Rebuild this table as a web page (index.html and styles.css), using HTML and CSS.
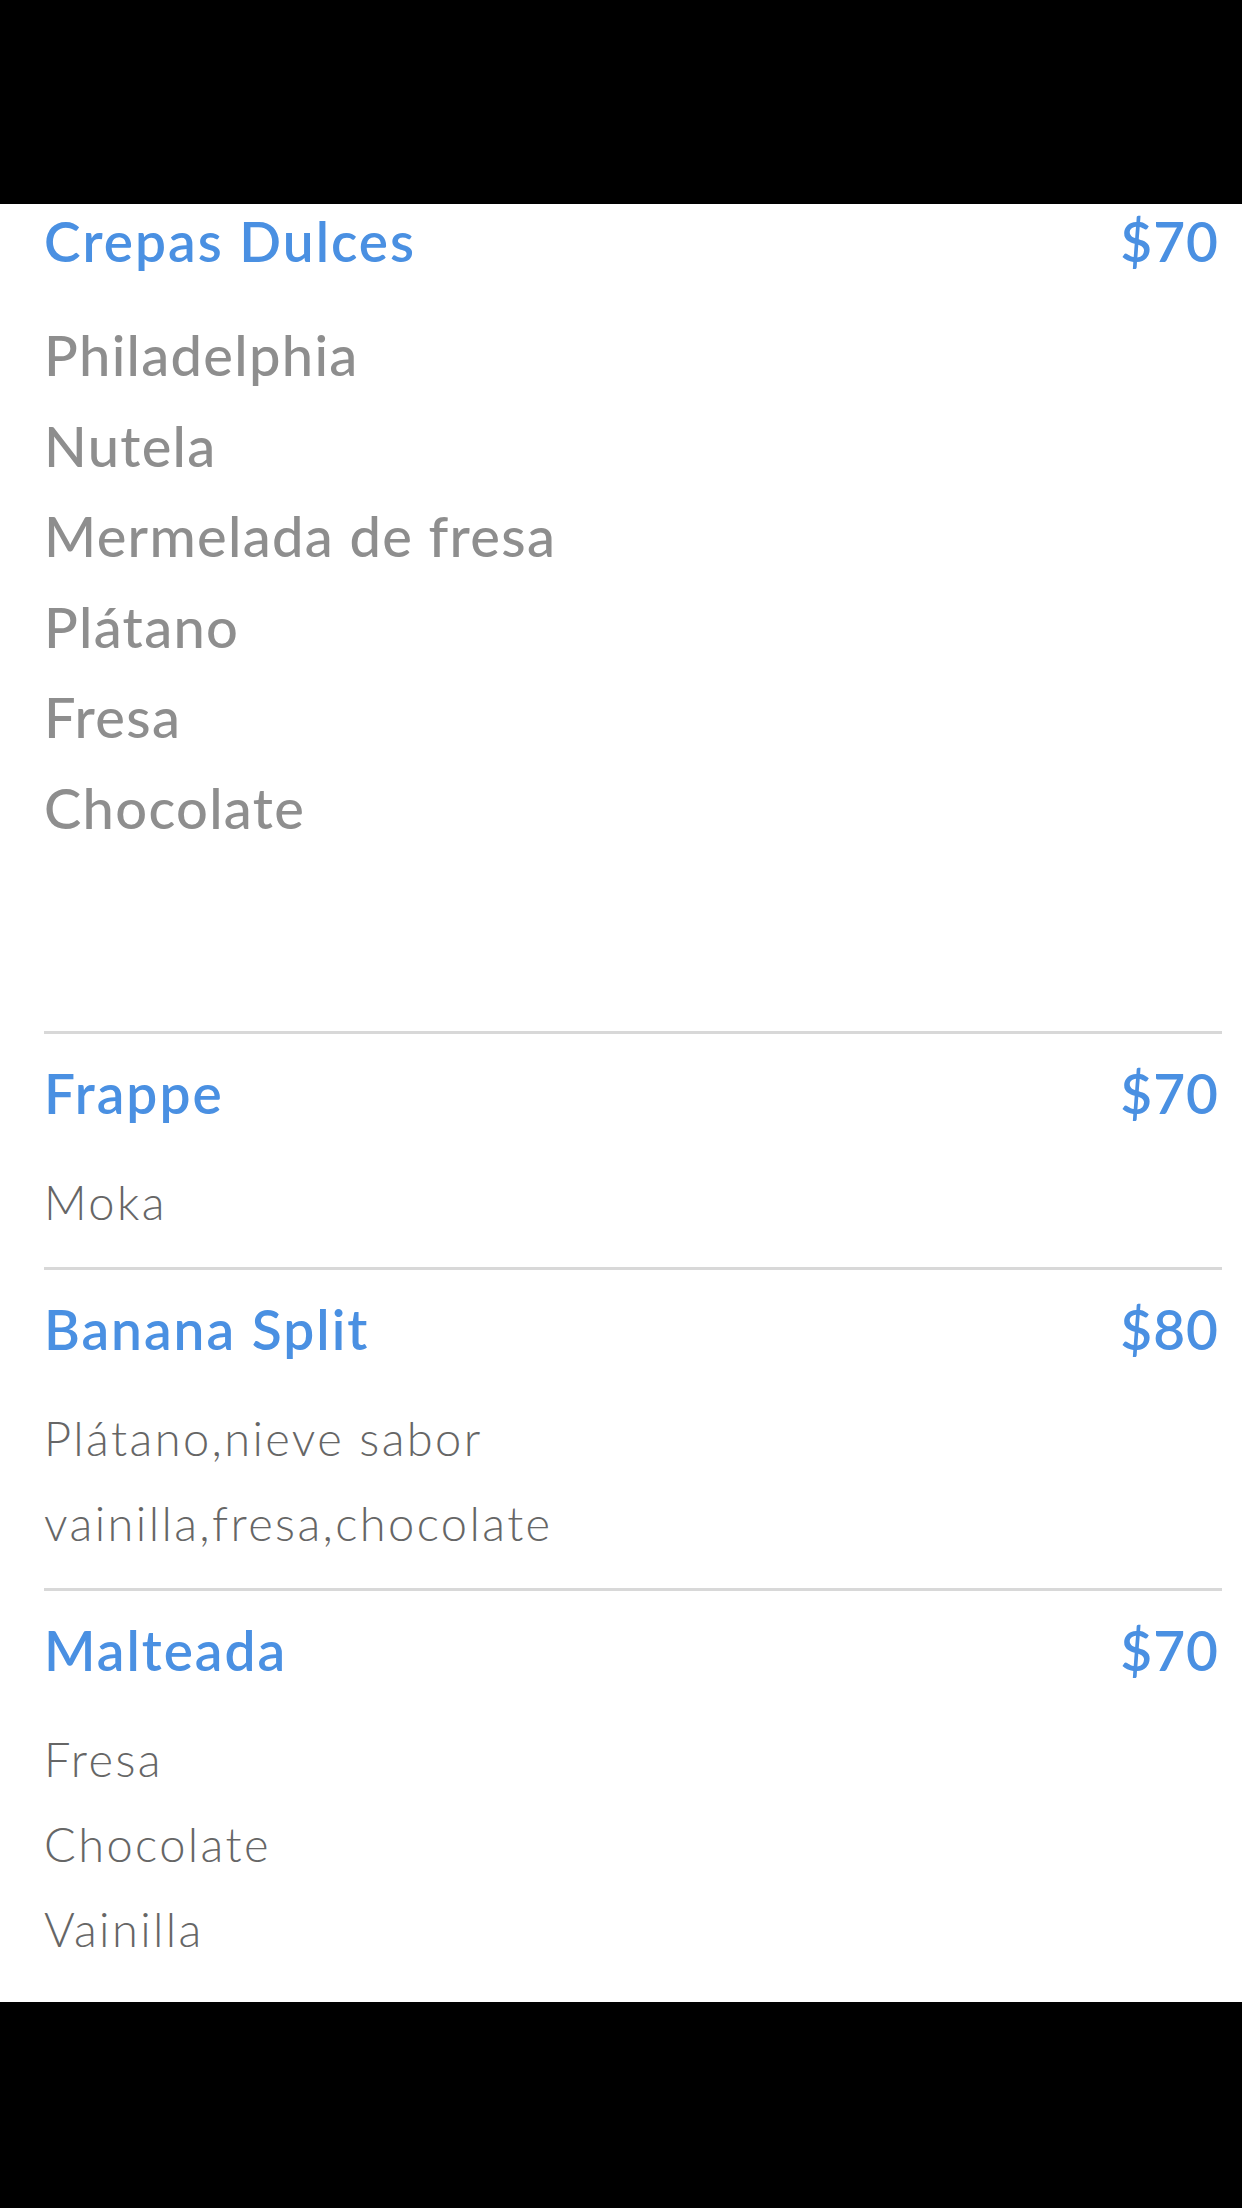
FILE: index.html
```html
<!DOCTYPE html>
<html lang="es">
<head>
  <meta charset="UTF-8">
  <title>Menú - Postres</title>
  <link rel="stylesheet" href="styles.css">
</head>
<body>
  <div class="top-bar"></div>
  <div class="menu">
    <div class="section first">
      <div class="row">
        <span class="title">Crepas Dulces</span>
        <span class="price">$70</span>
      </div>
      <ul class="items">
        <li>Philadelphia</li>
        <li>Nutela</li>
        <li>Mermelada de fresa</li>
        <li>Plátano</li>
        <li>Fresa</li>
        <li>Chocolate</li>
      </ul>
    </div>

    <div class="section">
      <div class="row">
        <span class="title">Frappe</span>
        <span class="price">$70</span>
      </div>
      <ul class="desc">
        <li>Moka</li>
      </ul>
    </div>

    <div class="section">
      <div class="row">
        <span class="title">Banana Split</span>
        <span class="price">$80</span>
      </div>
      <ul class="desc">
        <li>Plátano,nieve sabor</li>
        <li>vainilla,fresa,chocolate</li>
      </ul>
    </div>

    <div class="section last">
      <div class="row">
        <span class="title">Malteada</span>
        <span class="price">$70</span>
      </div>
      <ul class="desc">
        <li>Fresa</li>
        <li>Chocolate</li>
        <li>Vainilla</li>
      </ul>
    </div>
  </div>
  <div class="bottom-bar"></div>
</body>
</html>
```

FILE: styles.css
```css
body {
  margin: 0;
  background: #000;
  font-family: Lato, "Open Sans", sans-serif;
}
.top-bar {
  height: 204px;
}
.menu {
  background: #fff;
  height: 1798px;
  overflow: hidden;
  padding: 0 20px 0 44px;
}
.section {
  padding: 24px 0 22px;
  border-bottom: 3px solid #d8d8d8;
}
.section.first {
  padding: 2px 0 178px;
}
.section.last {
  border-bottom: none;
}
.row {
  display: flex;
  justify-content: space-between;
  align-items: baseline;
}
.title, .price {
  color: #4a90e2;
  font-size: 55px;
  font-weight: 600;
  line-height: 70px;
  letter-spacing: 2px;
}
.price {
  letter-spacing: 1px;
  padding-right: 3px;
}
ul {
  list-style: none;
  margin: 0;
  padding: 0;
}
.items {
  margin-top: 34px;
}
.items li {
  color: #8e8e8e;
  font-size: 56px;
  font-weight: 500;
  line-height: 90.5px;
  letter-spacing: 1.3px;
}
.desc {
  margin-top: 32px;
}
.desc li {
  color: #666;
  font-size: 47px;
  font-weight: 300;
  line-height: 85px;
  letter-spacing: 2.4px;
}
```
